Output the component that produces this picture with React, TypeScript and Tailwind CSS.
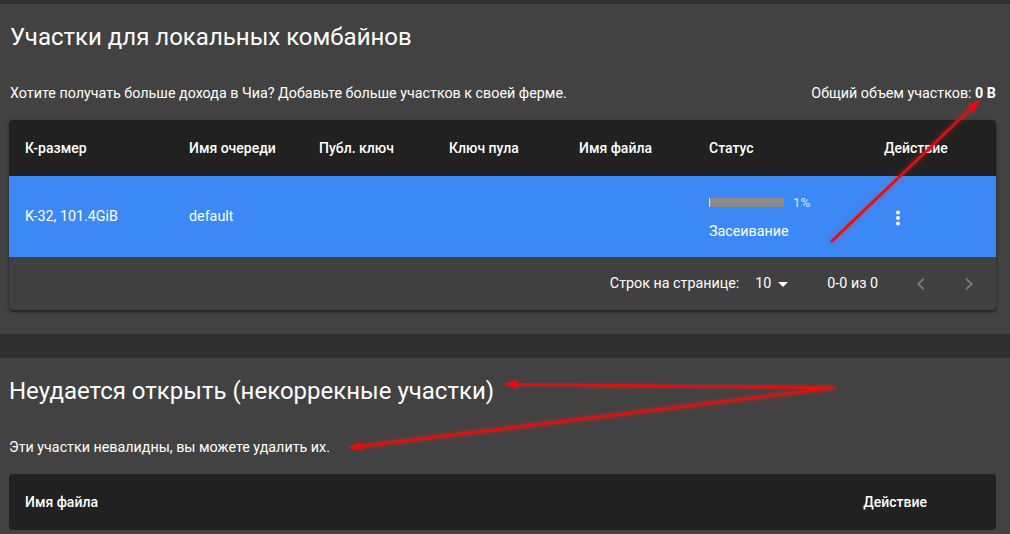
import React from "react";

function Kebab() {
  return (
    <svg width="6" height="16" viewBox="0 0 6 16" className="block">
      <circle cx="3" cy="2.5" r="2" fill="#fff" />
      <circle cx="3" cy="8" r="2" fill="#fff" />
      <circle cx="3" cy="13.5" r="2" fill="#fff" />
    </svg>
  );
}

function Chevron({ dir }: { dir: "left" | "right" }) {
  return (
    <svg width="24" height="24" viewBox="0 0 24 24" className="block">
      {dir === "left" ? (
        <path d="M15.41 7.41 14 6l-6 6 6 6 1.41-1.41L10.83 12z" fill="rgba(255,255,255,0.3)" />
      ) : (
        <path d="M10 6 8.59 7.41 13.17 12l-4.58 4.59L10 18l6-6z" fill="rgba(255,255,255,0.3)" />
      )}
    </svg>
  );
}

function Arrow({ x1, y1, x2, y2 }: { x1: number; y1: number; x2: number; y2: number }) {
  const ang = Math.atan2(y2 - y1, x2 - x1);
  const len = 15;
  const w = 5;
  const bx = x2 - Math.cos(ang) * len;
  const by = y2 - Math.sin(ang) * len;
  const px = -Math.sin(ang) * w;
  const py = Math.cos(ang) * w;
  const pts = `${x2},${y2} ${bx + px},${by + py} ${bx - px},${by - py}`;
  return (
    <g>
      <line x1={x1} y1={y1} x2={bx} y2={by} stroke="#ff1a1a" strokeWidth="5" strokeLinecap="round" opacity="0.35" filter="url(#glow)" />
      <line x1={x1} y1={y1} x2={bx} y2={by} stroke="#e10f0f" strokeWidth="2.6" strokeLinecap="round" />
      <polygon points={pts} fill="#e10f0f" />
    </g>
  );
}

export default function App() {
  return (
    <div className="relative w-[1010px] h-[534px] overflow-hidden bg-[#303030] text-white font-['Roboto',sans-serif]">
      <div className="h-[4px]" />
      <section className="bg-[#424242] pl-[9px] pr-[14px] pt-[17px] pb-[24px]">
        <h1 className="text-[24px] leading-[32px] font-normal pl-[1px]">Участки для локальных комбайнов</h1>
        <div className="mt-[30px] flex justify-between text-[14.3px] leading-[20px] pl-[1px]">
          <span>Хотите получать больше дохода в Чиа? Добавьте больше участков к своей ферме.</span>
          <span>
            Общий объем участков: <b className="font-bold">0 B</b>
          </span>
        </div>
        <div className="mt-[17px] rounded-[4px] overflow-hidden bg-[#404040] shadow-[0_2px_2px_rgba(0,0,0,0.35),0_1px_4px_rgba(0,0,0,0.25)]">
          <div className="grid grid-cols-[164px_130px_130px_130px_130px_175px_1fr] pl-[16px] h-[56px] items-center bg-[#212121] text-[14px] font-medium">
            <div>К-размер</div>
            <div>Имя очереди</div>
            <div>Публ. ключ</div>
            <div>Ключ пула</div>
            <div>Имя файла</div>
            <div>Статус</div>
            <div>Действие</div>
          </div>
          <div className="grid grid-cols-[164px_130px_130px_130px_130px_175px_1fr] pl-[16px] h-[81px] items-center bg-[#3c89f5] text-[14.3px]">
            <div>K-32, 101.4GiB</div>
            <div>default</div>
            <div />
            <div />
            <div />
            <div className="flex flex-col">
              <div className="flex items-center gap-[9px] mt-[2px]">
                <div className="w-[75px] h-[9px] bg-[#8b8b8b] flex">
                  <div className="w-[1px] h-full bg-[#e6e6e6]" />
                </div>
                <span className="text-[13.5px] leading-[14px] text-[#d5e4fc]">1%</span>
              </div>
              <div className="mt-[13px] leading-[18px]">Засеивание</div>
            </div>
            <div className="pl-[11px] pt-[2px]">
              <Kebab />
            </div>
          </div>
          <div className="h-[53px] flex items-center justify-end text-[14.3px] pr-[3px]">
            <span>Строк на странице:</span>
            <span className="ml-[16px]">10</span>
            <svg width="24" height="24" viewBox="0 0 24 24" className="ml-[0px]">
              <path d="M7 10l5 5 5-5z" fill="#fff" />
            </svg>
            <span className="ml-[32px]">0-0 из 0</span>
            <div className="ml-[19px] w-[48px] h-[48px] flex items-center justify-center">
              <Chevron dir="left" />
            </div>
            <div className="w-[48px] h-[48px] flex items-center justify-center">
              <Chevron dir="right" />
            </div>
          </div>
        </div>
      </section>
      <div className="h-[24px]" />
      <section className="bg-[#424242] pl-[9px] pr-[14px] pt-[17px] pb-[23px] h-[200px]">
        <h1 className="text-[24px] leading-[32px] font-normal">Неудается открыть (некоррекные участки)</h1>
        <div className="mt-[30px] text-[14.3px] leading-[20px]">Эти участки невалидны, вы можете удалить их.</div>
        <div className="mt-[17px] rounded-[4px] overflow-hidden bg-[#212121] h-[56px] flex items-center justify-between pl-[16px] pr-[69px] text-[14px] font-medium">
          <span>Имя файла</span>
          <span>Действие</span>
        </div>
      </section>
      <svg className="absolute inset-0 pointer-events-none" width="1010" height="534">
        <defs>
          <filter id="glow" x="-20%" y="-20%" width="140%" height="140%">
            <feGaussianBlur stdDeviation="2" />
          </filter>
        </defs>
        <Arrow x1={832} y1={241} x2={981} y2={99} />
        <Arrow x1={833} y1={388} x2={503} y2={384} />
        <Arrow x1={833} y1={388} x2={347} y2={448} />
      </svg>
    </div>
  );
}
